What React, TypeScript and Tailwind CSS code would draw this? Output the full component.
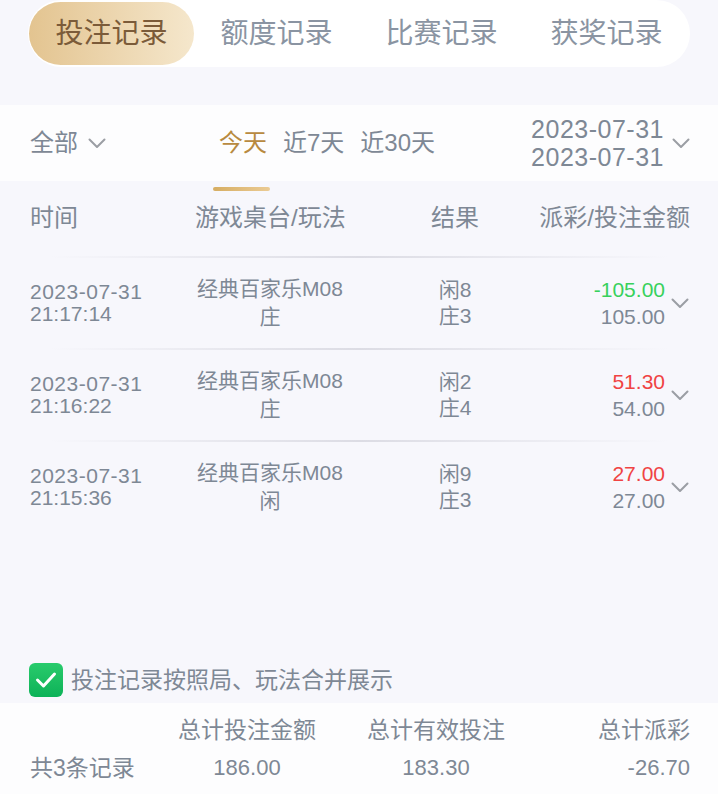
import React from "react";

interface BetRecord {
  date: string;
  time: string;
  table: string;
  play: string;
  player: string;
  banker: string;
  payout: string;
  amount: string;
  win: boolean;
}

const records: BetRecord[] = [
  { date: "2023-07-31", time: "21:17:14", table: "经典百家乐M08", play: "庄", player: "闲8", banker: "庄3", payout: "-105.00", amount: "105.00", win: false },
  { date: "2023-07-31", time: "21:16:22", table: "经典百家乐M08", play: "庄", player: "闲2", banker: "庄4", payout: "51.30", amount: "54.00", win: true },
  { date: "2023-07-31", time: "21:15:36", table: "经典百家乐M08", play: "闲", player: "闲9", banker: "庄3", payout: "27.00", amount: "27.00", win: true },
];

const tabs = ["投注记录", "额度记录", "比赛记录", "获奖记录"];

function Chevron() {
  return (
    <svg width="18" height="11" viewBox="0 0 18 11" fill="none" className="shrink-0">
      <polyline points="1.5,1.5 9,9 16.5,1.5" stroke="#9b9ea4" strokeWidth="2" strokeLinecap="round" strokeLinejoin="round" />
    </svg>
  );
}

function Divider() {
  return <div className="mx-[50px] h-[2px] bg-gradient-to-r from-transparent via-[#dcdce4] to-transparent" />;
}

export default function App() {
  return (
    <div
      className="h-screen flex flex-col bg-[#f7f7fc] text-[#7e8895]"
      style={{ fontFamily: '"Liberation Sans", "Noto Sans CJK SC", sans-serif' }}
    >
      <div className="px-[28px]">
        <div className="flex h-[67px] rounded-full bg-white px-px py-[2px]">
          {tabs.map((t, i) => (
            <div
              key={t}
              className={
                i === 0
                  ? "flex-1 flex items-center justify-center rounded-full bg-gradient-to-r from-[#e3c490] to-[#f5e7cc] text-[28px] text-[#7b5b39]"
                  : "flex-1 flex items-center justify-center text-[28px] text-[#8a94a2]"
              }
            >
              {t}
            </div>
          ))}
        </div>
      </div>

      <div className="mt-[38px] h-[76px] bg-[#fdfdfe] flex items-center pl-[30px] pr-[28px]">
        <span className="text-[24px] leading-[28px]">全部</span>
        <span className="ml-[10px]"><Chevron /></span>
        <div className="ml-[113px] flex gap-[16px] text-[24px] leading-[28px]">
          <span className="text-[#b88a40]">今天</span>
          <span>近7天</span>
          <span>近30天</span>
        </div>
        <div className="ml-auto flex items-center gap-[8px]">
          <div className="text-[25px] leading-[28px] text-right tracking-[0.5px]">
            <div>2023-07-31</div>
            <div>2023-07-31</div>
          </div>
          <Chevron />
        </div>
      </div>
      <div className="mt-[6px] ml-[213px] w-[57px] h-[4px] rounded-full bg-gradient-to-r from-[#d6ad62] to-[#ebcb94]" />

      <div className="mt-[15px] flex pl-[30px] pr-[28px] text-[24px] leading-[24px] whitespace-nowrap">
        <div className="w-[165px] shrink-0">时间</div>
        <div className="w-[150px] shrink-0">游戏桌台/玩法</div>
        <div className="w-[220px] shrink-0 text-center">结果</div>
        <div className="flex-1 min-w-0 flex justify-end">派彩/投注金额</div>
      </div>
      <div className="mt-[26px]">
        <Divider />
      </div>

      {records.map((r, i) => (
        <div key={r.time}>
          <div className="h-[90px] flex items-center pl-[30px] pr-[29px] text-[21px] whitespace-nowrap">
            <div className="w-[165px] shrink-0 leading-[22px]">
              <div className="tracking-[0.5px]">{r.date}</div>
              <div>{r.time}</div>
            </div>
            <div className="w-[150px] shrink-0 leading-[28px] text-center">
              <div>{r.table}</div>
              <div>{r.play}</div>
            </div>
            <div className="w-[220px] shrink-0 flex justify-center leading-[26px]">
              <div>
                <div>{r.player}</div>
                <div>{r.banker}</div>
              </div>
            </div>
            <div className="flex-1 text-right leading-[27px]">
              <div className={r.win ? "text-[#f04343]" : "text-[#38d15c]"}>{r.payout}</div>
              <div>{r.amount}</div>
            </div>
            <span className="ml-[6px]"><Chevron /></span>
          </div>
          {i < records.length - 1 && <Divider />}
        </div>
      ))}

      <div className="flex-1" />

      <div className="h-[46px] flex items-center pl-[29px] gap-[8px]">
        <div className="w-[34px] h-[34px] rounded-[6px] bg-gradient-to-b from-[#28cb6c] to-[#0bb258] flex items-center justify-center">
          <svg width="22" height="18" viewBox="0 0 22 18" fill="none">
            <polyline points="2.5,9 8.5,15 19.5,3" stroke="white" strokeWidth="3" strokeLinecap="round" strokeLinejoin="round" />
          </svg>
        </div>
        <span className="text-[23px] leading-[28px]">投注记录按照局、玩法合并展示</span>
      </div>

      <div className="h-[91px] bg-[#fdfdfe] pt-[13px] pl-[30px] pr-[28px] leading-[28px] whitespace-nowrap">
        <div className="grid grid-cols-[148px_138px_240px_1fr] text-[23px]">
          <div />
          <div className="text-center">总计投注金额</div>
          <div className="text-center">总计有效投注</div>
          <div className="text-right">总计派彩</div>
        </div>
        <div className="mt-[10px] grid grid-cols-[148px_138px_240px_1fr] text-[22px]">
          <div className="text-[23px]">共3条记录</div>
          <div className="text-center">186.00</div>
          <div className="text-center">183.30</div>
          <div className="text-right">-26.70</div>
        </div>
      </div>
    </div>
  );
}
